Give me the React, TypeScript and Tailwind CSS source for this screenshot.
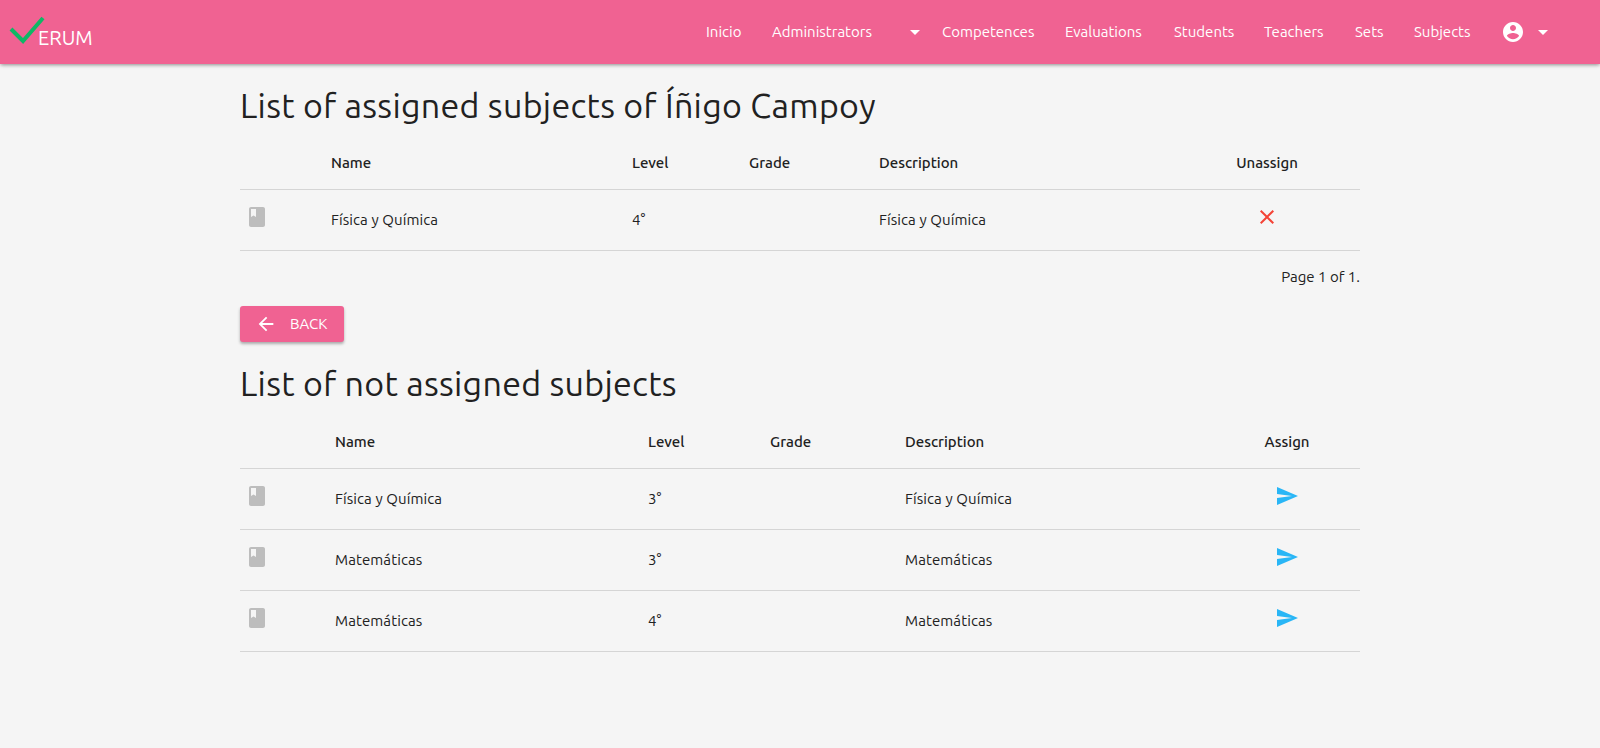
const FONT = "font-['Ubuntu','Noto_Sans','Open_Sans',sans-serif]";

const BookIcon = () => (
  <svg viewBox="0 0 24 24" className="block h-6 w-6 fill-[#bdbdbd]">
    <path d="M18 2H6c-1.1 0-2 .9-2 2v16c0 1.1.9 2 2 2h12c1.1 0 2-.9 2-2V4c0-1.1-.9-2-2-2zM6 4h5v8l-2.5-1.5L6 12V4z" />
  </svg>
);

const Caret = () => (
  <svg viewBox="0 0 24 24" className="h-6 w-6 fill-white">
    <path d="M7 10l5 5 5-5z" />
  </svg>
);

const CloseIcon = () => (
  <svg viewBox="0 0 24 24" className="mx-auto block h-6 w-6 fill-[#f44336]">
    <path d="M19 6.41L17.59 5 12 10.59 6.41 5 5 6.41 10.59 12 5 17.59 6.41 19 12 13.41 17.59 19 19 17.59 13.41 12z" />
  </svg>
);

const SendIcon = () => (
  <svg viewBox="0 0 24 24" className="mx-auto block h-6 w-6 fill-[#29b6f6]">
    <path d="M2.01 21L23 12 2.01 3 2 10l15 2-15 2z" />
  </svg>
);

const navLinks = [
  { label: "Competences", width: "w-[93px]" },
  { label: "Evaluations", width: "w-[79px]" },
  { label: "Students", width: "w-[60px]" },
  { label: "Teachers", width: "w-[61px]" },
  { label: "Sets", width: "w-[29px]" },
  { label: "Subjects", width: "w-[57px]" },
];

const assigned = [{ name: "Física y Química", level: "4°", description: "Física y Química" }];

const notAssigned = [
  { name: "Física y Química", level: "3°", description: "Física y Química" },
  { name: "Matemáticas", level: "3°", description: "Matemáticas" },
  { name: "Matemáticas", level: "4°", description: "Matemáticas" },
];

interface Subject {
  name: string;
  level: string;
  description: string;
}

const SubjectTable = ({
  rows,
  action,
  icon,
  widths,
}: {
  rows: Subject[];
  action: string;
  icon: React.ReactNode;
  widths: string[];
}) => (
  <table className="w-full table-fixed border-collapse text-[15px] text-[#212121]">
    <colgroup>
      {widths.map((w, i) => (
        <col key={i} className={w} />
      ))}
    </colgroup>
    <thead>
      <tr className="h-[63px] border-b border-[#d5d5d5] text-left">
        <th />
        <th className="pt-[11px] font-medium">Name</th>
        <th className="pt-[11px] font-medium">Level</th>
        <th className="pt-[11px] font-medium">Grade</th>
        <th className="pt-[11px] font-medium">Description</th>
        <th className="pt-[11px] text-center font-medium">{action}</th>
      </tr>
    </thead>
    <tbody className="tracking-[0.1px]">
      {rows.map((row, i) => (
        <tr key={i} className="h-[61px] border-b border-[#d5d5d5]">
          <td className="pb-1.5 pl-[5px]">
            <BookIcon />
          </td>
          <td className="pt-px">{row.name}</td>
          <td className="pt-px">{row.level}</td>
          <td />
          <td className="pt-px">{row.description}</td>
          <td className="pb-1.5">{icon}</td>
        </tr>
      ))}
    </tbody>
  </table>
);

export default function App() {
  return (
    <div className={`min-h-[748px] bg-[#f5f5f5] ${FONT}`}>
      <header className="flex h-16 items-center justify-between bg-[#f06292] pl-2 pr-[45px] text-white shadow-[0_2px_4px_-1px_rgba(0,0,0,.3),0_1px_3px_rgba(0,0,0,.15)]">
        <div className="-mt-[4px] flex items-end">
          <svg viewBox="0 0 37 28" className="h-7 w-[37px]">
            <path d="M3 13 L15 25 L35 2" fill="none" stroke="#0fb765" strokeWidth="4" />
          </svg>
          <span className="-mb-[4px] -ml-[7px] text-[20px] leading-5">ERUM</span>
        </div>
        <nav className="flex items-center text-[15px]">
          <span className="w-[36px]">Inicio</span>
          <span className="ml-[30px] w-[101px] whitespace-nowrap">Administrators</span>
          <span className="ml-[30px] mr-[15px] flex">
            <Caret />
          </span>
          {navLinks.map((link) => (
            <span key={link.label} className={`${link.width} mr-[30px] whitespace-nowrap`}>
              {link.label}
            </span>
          ))}
          <svg viewBox="0 0 24 24" className="h-6 w-6 fill-white">
            <path d="M12 2C6.48 2 2 6.48 2 12s4.48 10 10 10 10-4.48 10-10S17.52 2 12 2zm0 3c1.66 0 3 1.34 3 3s-1.34 3-3 3-3-1.34-3-3 1.34-3 3-3zm0 14.2c-2.5 0-4.71-1.28-6-3.22.03-1.99 4-3.08 6-3.08 1.99 0 5.97 1.09 6 3.08-1.29 1.94-3.5 3.22-6 3.22z" />
          </svg>
          <span className="ml-[6px] flex">
            <Caret />
          </span>
        </nav>
      </header>

      <main className="mx-auto w-[1120px]">
        <h1 className="mt-5 text-[34px] leading-[42px] tracking-[0.3px] text-[#212121]">
          List of assigned subjects of Íñigo Campoy
        </h1>
        <SubjectTable
          rows={assigned}
          action="Unassign"
          icon={<CloseIcon />}
          widths={["w-[91px]", "w-[301px]", "w-[117px]", "w-[130px]", "w-[295px]", "w-[186px]"]}
        />
        <p className="mt-4 text-right text-[15px] leading-5 text-[#212121]">Page 1 of 1.</p>
        <button className="mt-[19px] flex h-9 w-[104px] items-center rounded-[3px] bg-[#f06292] pl-[15px] text-[15px] text-white shadow-[0_2px_3px_rgba(0,0,0,.3)]">
          <svg viewBox="0 0 24 24" className="h-[22px] w-[22px] fill-white">
            <path d="M20 11H7.83l5.59-5.59L12 4l-8 8 8 8 1.41-1.41L7.83 13H20v-2z" />
          </svg>
          <span className="ml-[13px] pt-px">BACK</span>
        </button>
        <h1 className="mt-[18px] text-[34px] leading-[46px] tracking-[0.3px] text-[#212121]">
          List of not assigned subjects
        </h1>
        <SubjectTable
          rows={notAssigned}
          action="Assign"
          icon={<SendIcon />}
          widths={["w-[95px]", "w-[313px]", "w-[122px]", "w-[135px]", "w-[309px]", "w-[146px]"]}
        />
      </main>
    </div>
  );
}
